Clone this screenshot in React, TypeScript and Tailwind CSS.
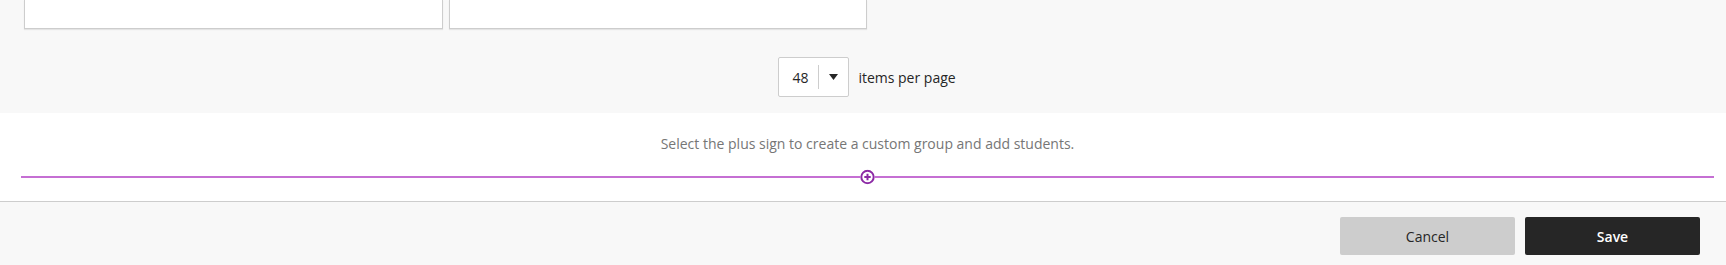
import { useState } from 'react';

function PlusCircle() {
  return (
    <svg width="15" height="15" viewBox="0 0 15 15" className="block">
      <circle cx="7.5" cy="7.5" r="6.2" fill="white" stroke="#8c2aa5" strokeWidth="2" />
      <path d="M7.5 4.3v6.4M4.3 7.5h6.4" stroke="#8c2aa5" strokeWidth="2" />
    </svg>
  );
}

export default function App() {
  const [perPage] = useState(48);

  return (
    <div className="w-[1726px] h-[265px] overflow-hidden bg-[#f8f8f8] font-['Open_Sans',_'Noto_Sans',_sans-serif] text-[14px] text-[#262626]">
      {/* list area */}
      <div className="h-[113px]">
        <div className="flex gap-[6px] pl-[24px]">
          <div className="w-[419px] h-[29px] bg-white border border-t-0 border-[#cdcdcd] shadow-[0_1px_1px_rgba(0,0,0,0.08)]" />
          <div className="w-[418px] h-[29px] bg-white border border-t-0 border-[#cdcdcd] shadow-[0_1px_1px_rgba(0,0,0,0.08)]" />
        </div>

        <div className="mt-[28px] flex items-center justify-center gap-[9px] pl-[8px]">
          <div className="w-[71px] h-[40px] bg-white border border-[#cdcdcd] rounded-[2px] flex items-center">
            <span className="pl-[13px] w-[39px] text-[#262626]">{perPage}</span>
            <span className="w-px h-[24px] bg-[#cdcdcd]" />
            <span className="flex-1 flex justify-center">
              <svg width="9" height="6" viewBox="0 0 9 6">
                <path d="M0 0h9L4.5 6z" fill="#262626" />
              </svg>
            </span>
          </div>
          <span className="text-[#262626]">items per page</span>
        </div>
      </div>

      {/* custom group area */}
      <div className="h-[89px] bg-white border-b border-[#cdcdcd] pt-[21px]">
        <div className="ml-[21px] mr-[12px]">
          <p className="text-center leading-[20px] text-[#767676]">
            Select the plus sign to create a custom group and add students.
          </p>
          <div className="relative mt-[22px] h-[2px] bg-[#c56fd3] flex justify-center items-center">
            <button className="absolute top-1/2 -translate-y-1/2 bg-white rounded-full">
              <PlusCircle />
            </button>
          </div>
        </div>
      </div>

      {/* footer */}
      <div className="flex justify-end gap-[10px] pt-[15px] pr-[26px]">
        <button className="w-[175px] h-[38px] rounded-[2px] bg-[#cdcdcd] text-[#262626]">Cancel</button>
        <button className="w-[175px] h-[38px] rounded-[2px] bg-[#262626] text-white font-semibold">Save</button>
      </div>
    </div>
  );
}
